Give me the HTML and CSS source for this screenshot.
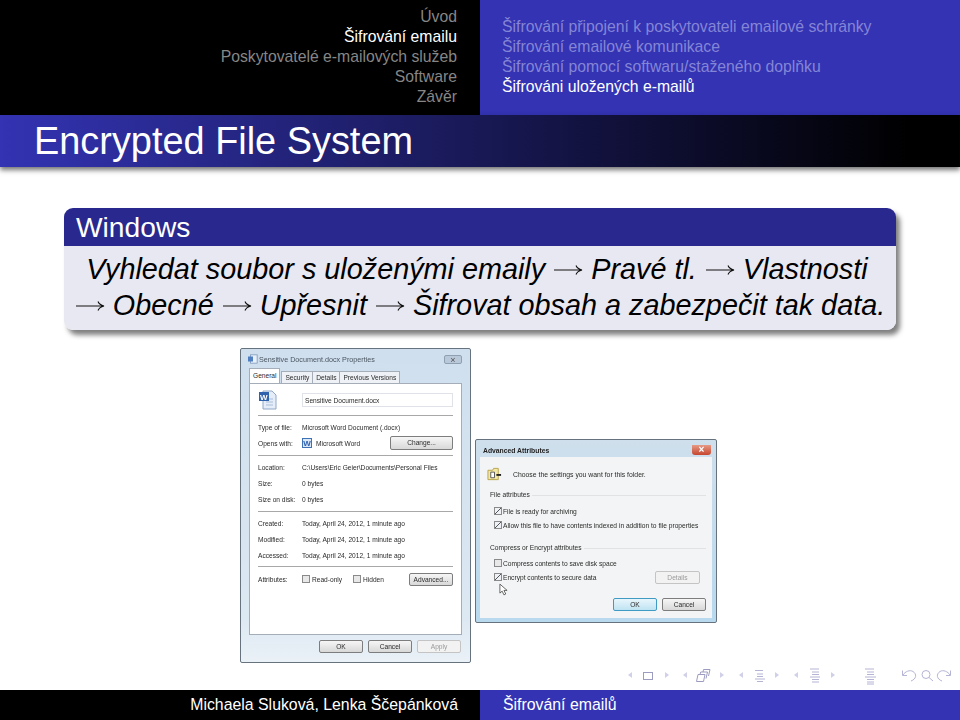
FILE: index.html
```html
<!DOCTYPE html>
<html lang="cs">
<head>
    <meta charset="UTF-8">
    <title>Encrypted File System</title>
    <link rel="stylesheet" href="styles.css">
</head>
<body>

<div class="slide">
    <!-- Navigace nahoře -->
    <div class="top-nav">
        <ul class="sections">
            <li>Úvod</li>
            <li class="active">Šifrování emailu</li>
            <li>Poskytovatelé e-mailových služeb</li>
            <li>Software</li>
            <li>Závěr</li>
        </ul>
        <ul class="subsections">
            <li>Šifrování připojení k poskytovateli emailové schránky</li>
            <li>Šifrování emailové komunikace</li>
            <li>Šifrování pomocí softwaru/staženého doplňku</li>
            <li class="active">Šifrováni uložených e-mailů</li>
        </ul>
    </div>

    <div class="title-bar">
        <h1>Encrypted File System</h1>
    </div>

    <div class="block">
        <div class="block-head">Windows</div>
        <div class="block-body">
            <div class="line-one">Vyhledat soubor s uloženými emaily <svg class="arrow" viewBox="0 0 30 14"><path d="M1 7H29M23 2.500C24 5 26 6.300 29 7C26 7.700 24 9 23 11.500"/></svg> Pravé tl. <svg class="arrow" viewBox="0 0 30 14"><path d="M1 7H29M23 2.500C24 5 26 6.300 29 7C26 7.700 24 9 23 11.500"/></svg> Vlastnosti</div>
            <div><svg class="arrow" viewBox="0 0 30 14"><path d="M1 7H29M23 2.500C24 5 26 6.300 29 7C26 7.700 24 9 23 11.500"/></svg> Obecné <svg class="arrow" viewBox="0 0 30 14"><path d="M1 7H29M23 2.500C24 5 26 6.300 29 7C26 7.700 24 9 23 11.500"/></svg> Upřesnit <svg class="arrow" viewBox="0 0 30 14"><path d="M1 7H29M23 2.500C24 5 26 6.300 29 7C26 7.700 24 9 23 11.500"/></svg> Šifrovat obsah a zabezpečit tak data.</div>
        </div>
    </div>

    <div class="shots">
        <!-- Vlastnosti souboru -->
        <div class="win props">
            <div class="win-title">
                <svg class="title-icon" viewBox="0 0 12 12"><rect x="3" y="1" width="8" height="10" fill="#e8f0fa" stroke="#7f9bbd"/><rect x="0" y="3" width="6" height="6" fill="#4f7fc0"/></svg>
                <span class="title-text">Sensitive Document.docx Properties</span>
                <span class="close-plain">&times;</span>
            </div>
            <div class="tabs">
                <span class="tab current">General</span>
                <span class="tab">Security</span>
                <span class="tab">Details</span>
                <span class="tab">Previous Versions</span>
            </div>
            <div class="panel">
                <div class="file-head">
                    <svg class="doc-icon" viewBox="0 0 20 20"><path d="M5 1H14L18 5V19H5Z" fill="#e4edf8" stroke="#8fa8c8"/><path d="M8 9H15M8 12H15M8 15H15" stroke="#a9bdd8"/><rect x="1" y="2" width="10" height="9" fill="#2f62ad"/><text x="2" y="9.500" class="doc-w">W</text></svg>
                    <div class="file-name">Sensitive Document.docx</div>
                </div>
                <div class="sep"></div>
                <div class="row first"><span class="label">Type of file:</span><span>Microsoft Word Document (.docx)</span></div>
                <div class="row"><span class="label">Opens with:</span><span class="app"><svg class="app-icon" viewBox="0 0 10 10"><rect x=".5" y=".5" width="9" height="9" fill="#dbe8f7" stroke="#3f71b5"/><text x="1.200" y="8" class="app-w">W</text></svg>Microsoft Word</span><span class="btn change">Change...</span></div>
                <div class="sep"></div>
                <div class="row first"><span class="label">Location:</span><span>C:\Users\Eric Geier\Documents\Personal Files</span></div>
                <div class="row"><span class="label">Size:</span><span>0 bytes</span></div>
                <div class="row"><span class="label">Size on disk:</span><span>0 bytes</span></div>
                <div class="sep"></div>
                <div class="row first"><span class="label">Created:</span><span>Today, April 24, 2012, 1 minute ago</span></div>
                <div class="row"><span class="label">Modified:</span><span>Today, April 24, 2012, 1 minute ago</span></div>
                <div class="row"><span class="label">Accessed:</span><span>Today, April 24, 2012, 1 minute ago</span></div>
                <div class="sep tight"></div>
                <div class="row attrs"><span class="label">Attributes:</span><span class="check-label"><i class="box"></i>Read-only</span><span class="check-label hidden-attr"><i class="box"></i>Hidden</span><span class="btn advanced">Advanced...</span></div>
            </div>
            <div class="win-buttons">
                <span class="btn wide">OK</span>
                <span class="btn wide">Cancel</span>
                <span class="btn wide disabled">Apply</span>
            </div>
        </div>

        <!-- Rozšířené atributy -->
        <div class="win advanced-win">
            <div class="win-title tall">
                <span class="title-text">Advanced Attributes</span>
                <span class="close-red">&times;</span>
            </div>
            <div class="inner">
                <div class="intro">
                    <svg class="folder-icon" viewBox="0 0 16 14"><path d="M1 3H6L7 1H12V13H1Z" fill="#f3e7a6" stroke="#b7a24a"/><path d="M4 5H8V11H4Z" fill="#fff" stroke="#555"/><path d="M10 7H15V9H10Z" fill="#222"/></svg>
                    <span>Choose the settings you want for this folder.</span>
                </div>
                <fieldset class="group">
                    <legend>File attributes</legend>
                    <div class="opt"><i class="box on"></i>File is ready for archiving</div>
                    <div class="opt"><i class="box on"></i>Allow this file to have contents indexed in addition to file properties</div>
                </fieldset>
                <fieldset class="group second">
                    <legend>Compress or Encrypt attributes</legend>
                    <div class="opt"><i class="box"></i>Compress contents to save disk space</div>
                    <div class="opt"><i class="box on"></i>Encrypt contents to secure data<span class="btn disabled details">Details</span></div>
                    <svg class="cursor" viewBox="0 0 10 14"><path d="M1 1V11L3.500 8.800L5.500 13L7.500 12L5.500 8H9Z" fill="#fff" stroke="#333" stroke-width=".8"/></svg>
                </fieldset>
                <div class="adv-buttons">
                    <span class="btn wide default">OK</span>
                    <span class="btn wide">Cancel</span>
                </div>
            </div>
        </div>
    </div>

    <!-- Navigační symboly -->
    <div class="nav-symbols">
        <svg viewBox="0 0 340 20" width="340" height="20">
            <g class="tri">
                <path d="M8 7L12 4V10Z"/><path d="M45 4L49 7L45 10Z"/>
                <path d="M63 7L67 4V10Z"/><path d="M100 4L104 7L100 10Z"/>
                <path d="M119 7L123 4V10Z"/><path d="M155 4L159 7L155 10Z"/>
                <path d="M174 7L178 4V10Z"/><path d="M211 4L215 7L211 10Z"/>
            </g>
            <g class="lines">
                <rect x="23.500" y="4.500" width="9" height="7" class="dark"/>
                <path class="dark" d="M76.500 13.500L78 6.500H85L83.500 13.500ZM80 6.500L80.700 4H87.500L86 10.500M83 4L83.500 1.500H90L88.500 8"/>
                <path d="M135 2.500H143M137 6H143M137 8.500H143M135 11H145M137 13.500H143"/>
                <path d="M190 1H199M192 4H199M192 6.500H199M190 9H200M192 11.500H199M192 14H199"/>
                <path d="M245 1H254M247 4H254M247 6.500H254M245 9H256M247 11.500H254M247 14H254M247 16H254"/>
                <path d="M283 7C285 3.500 290 1.500 293 3.500C297 6 296.500 11 291 13M282.500 2.500V7.500H287"/>
                <circle cx="306" cy="6.500" r="4"/><path d="M309 9.500L313 13"/>
                <path d="M330 7C328 3.500 323 1.500 320 3.500C316 6 316.500 11 322 13M330.500 2.500V7.500H326"/>
            </g>
        </svg>
    </div>

    <div class="footer">
        <div class="foot-left">Michaela Sluková, Lenka Ščepánková</div>
        <div class="foot-right">Šifrování emailů</div>
    </div>
</div>

</body>
</html>
```

FILE: styles.css
```css
body {
    margin: 0;
    background-color: white;
    font-family: 'Liberation Sans', Arial, sans-serif;
}
ul {
    list-style-type: none;
    margin: 0;
}
.slide {
    width: 960px;
    height: 720px;
    display: flex;
    flex-direction: column;
    overflow: hidden;
}

/* horni navigace */
.top-nav {
    display: grid;
    grid-template-columns: 480px 480px;
    height: 115px;
    font-size: 15.75px;
    line-height: 20px;
}
.sections {
    background-color: black;
    color: #868686;
    text-align: right;
    padding: 7px 23px 0 0;
}
.subsections {
    background-color: #3333b3;
    color: #8585d6;
    padding: 17px 0 0 22px;
}
.sections .active,
.subsections .active {
    color: white;
}
.title-bar {
    height: 52px;
    background: linear-gradient(to right, #3333b3, #000 95%);
    box-shadow: 0 3px 5px rgba(0, 0, 0, 0.55);
    display: flex;
    align-items: center;
    padding-left: 34px;
    position: relative;
}
h1 {
    margin: 0;
    font-size: 37.9px;
    font-weight: normal;
    color: white;
}

/* blok s textem */
.block {
    margin: 41px 64px 0 64px;
    border-radius: 9px;
    box-shadow: 4px 5px 5px rgba(0, 0, 0, 0.5);
    overflow: hidden;
    flex: none;
}
.block-head {
    height: 38px;
    line-height: 38px;
    background-color: #28288e;
    color: white;
    font-size: 28.2px;
    padding-left: 12px;
}
.block-body {
    height: 84px;
    background-color: #e8e8f2;
    color: black;
    font-size: 28.8px;
    font-style: italic;
    line-height: 36px;
    text-align: center;
    box-sizing: border-box;
    padding-top: 5px;
}
.line-one {
    padding-right: 6px;
}
.arrow {
    width: 30px;
    height: 14px;
    fill: none;
    stroke: #111;
    stroke-width: 1.1;
    vertical-align: 2px;
}

/* screenshoty dialogu */
.shots {
    display: flex;
    align-items: flex-start;
    gap: 4px;
    margin-top: 18px;
    padding-left: 240px;
    font-size: 6.6px;
    color: #2a2a2a;
    filter: blur(0.4px);
}
.win {
    box-sizing: border-box;
    border: 1px solid #66727e;
    background: linear-gradient(#cfdfee, #dce8f2 85%, #eaf1f7);
    border-radius: 2px;
}
.props {
    width: 231px;
    height: 315px;
    padding: 0 8px;
}
.win-title {
    display: flex;
    align-items: center;
    height: 20px;
    color: #4a5560;
    font-size: 7.2px;
}
.title-icon {
    width: 10px;
    height: 10px;
    margin-right: 1px;
    margin-left: -1px;
}
.close-plain {
    margin-left: auto;
    width: 18px;
    height: 9px;
    line-height: 8px;
    text-align: center;
    background-color: #b9c9da;
    border: 1px solid #8fa0b2;
    font-size: 9px;
    border-radius: 2px;
    box-sizing: border-box;
    color: #555;
}
.tabs {
    display: flex;
    height: 14px;
    align-items: flex-end;
}
.tab {
    background-color: #eef1f5;
    border: 1px solid #a5aeb8;
    border-bottom: none;
    padding: 0 3px;
    height: 11px;
    line-height: 11px;
    margin-right: -1px;
}
.tab.current {
    background-color: white;
    height: 14px;
    line-height: 13px;
    position: relative;
    margin-right: 1px;
}
.panel {
    box-sizing: border-box;
    height: 252px;
    background-color: white;
    border: 1px solid #a5aeb8;
    padding: 0 8px;
}
.file-head {
    display: flex;
    align-items: center;
    height: 31px;
}
.doc-icon {
    width: 20px;
    height: 20px;
    margin-right: 24px;
}
.doc-w {
    font-size: 8px;
    font-weight: bold;
    fill: white;
}
.file-name {
    flex: 1;
    height: 14px;
    line-height: 13px;
    border: 1px solid #dfe3e8;
    padding-left: 2px;
    box-sizing: border-box;
}
.sep {
    height: 1px;
    background-color: #a8a8a8;
    margin-top: 4px;
}
.file-head + .sep {
    margin-top: 0;
}
.sep.tight {
    margin-top: 3px;
}
.row {
    display: flex;
    align-items: center;
    height: 16px;
}
.row.first {
    margin-top: 3px;
}
.row.attrs {
    margin-top: 4px;
}
.label {
    width: 44px;
    flex: none;
}
.app {
    display: flex;
    align-items: center;
}
.app-icon {
    width: 10px;
    height: 10px;
    margin-right: 4px;
}
.app-w {
    font-size: 8px;
    font-weight: bold;
    fill: #2f62ad;
}
.btn {
    box-sizing: border-box;
    display: inline-block;
    height: 13px;
    line-height: 11px;
    text-align: center;
    border: 1px solid #7d7d7d;
    border-radius: 2px;
    background: linear-gradient(#f6f6f6, #d8d8d8);
    color: #2a2a2a;
}
.change {
    width: 63px;
    height: 14px;
    line-height: 12px;
    margin-left: auto;
}
.advanced {
    width: 44px;
    margin-left: auto;
}
.box {
    display: inline-block;
    box-sizing: border-box;
    width: 8px;
    height: 8px;
    border: 1px solid #8a8a8a;
    background-color: #e8e8e8;
    margin-right: 2px;
    flex: none;
}
.box.on {
    background: linear-gradient(135deg, transparent 42%, #555 42%, #555 58%, transparent 58%), #eef2f7;
}
.check-label {
    display: flex;
    align-items: center;
}
.hidden-attr {
    margin-left: 11px;
}
.win-buttons {
    display: flex;
    justify-content: flex-end;
    gap: 5px;
    margin-top: 5px;
    padding-right: 1px;
}
.wide {
    width: 44px;
}
.disabled {
    color: #9a9a9a;
    border-color: #c4c4c4;
    background: #f2f2f2;
}
.advanced-win {
    width: 242px;
    height: 184px;
    margin-top: 91px;
    padding: 0 4px 4px 4px;
    background: linear-gradient(#cfdfec, #b8d9ee);
}
.win-title.tall {
    height: 14px;
    padding-top: 3px;
    color: #222;
    padding-left: 3px;
    font-weight: bold;
    font-size: 6.8px;
}
.close-red {
    margin-left: auto;
    width: 19px;
    height: 10px;
    line-height: 9px;
    font-size: 10px;
    text-align: center;
    color: white;
    border-radius: 0 0 3px 3px;
    background: linear-gradient(#e59a85, #c6452e);
    margin-right: 1px;
}
.inner {
    height: 161px;
    background-color: #f3f4f5;
    padding: 0 6px 0 10px;
    box-sizing: border-box;
}
.intro {
    display: flex;
    align-items: center;
    height: 34px;
    font-size: 6.85px;
}
.folder-icon {
    width: 15px;
    height: 14px;
    margin: 0 11px 0 -3px;
}
.group {
    border: 1px solid #e2e2e2;
    border-width: 1px 0 0 0;
    margin: 0;
    padding: 5px 0 0 0;
    height: 47px;
    box-sizing: border-box;
    font-size: 6.65px;
}
.group legend {
    padding: 0 2px 0 0;
    line-height: 8px;
}
.group.second {
    height: 54px;
    margin-top: 6px;
    padding-top: 4px;
    position: relative;
}
.opt {
    display: flex;
    align-items: center;
    height: 14px;
    padding-left: 4px;
}
.opt .box {
    margin-right: 1px;
}
.details {
    width: 45px;
    margin-left: auto;
    margin-right: 6px;
}
.cursor {
    position: absolute;
    left: 9px;
    top: 31px;
    width: 9px;
    height: 13px;
}
.adv-buttons {
    display: flex;
    justify-content: flex-end;
    gap: 5px;
}
.default {
    border-color: #3f9bc4;
    background: linear-gradient(#e8f6fc, #bfe3f2);
}

/* symboly a paticka */
.nav-symbols {
    margin-top: auto;
    height: 22px;
    display: flex;
    justify-content: flex-end;
}
.tri {
    fill: #d0d0e8;
}
.lines {
    fill: none;
    stroke: #b4b4d4;
    stroke-width: 1;
}
.lines .dark {
    stroke: #9c9cc0;
}
.footer {
    display: grid;
    grid-template-columns: 480px 480px;
    height: 30px;
    line-height: 30px;
    font-size: 15.85px;
    color: white;
}
.foot-left {
    background-color: black;
    text-align: right;
    padding-right: 22px;
}
.foot-right {
    background-color: #3333b3;
    padding-left: 23px;
}
```
